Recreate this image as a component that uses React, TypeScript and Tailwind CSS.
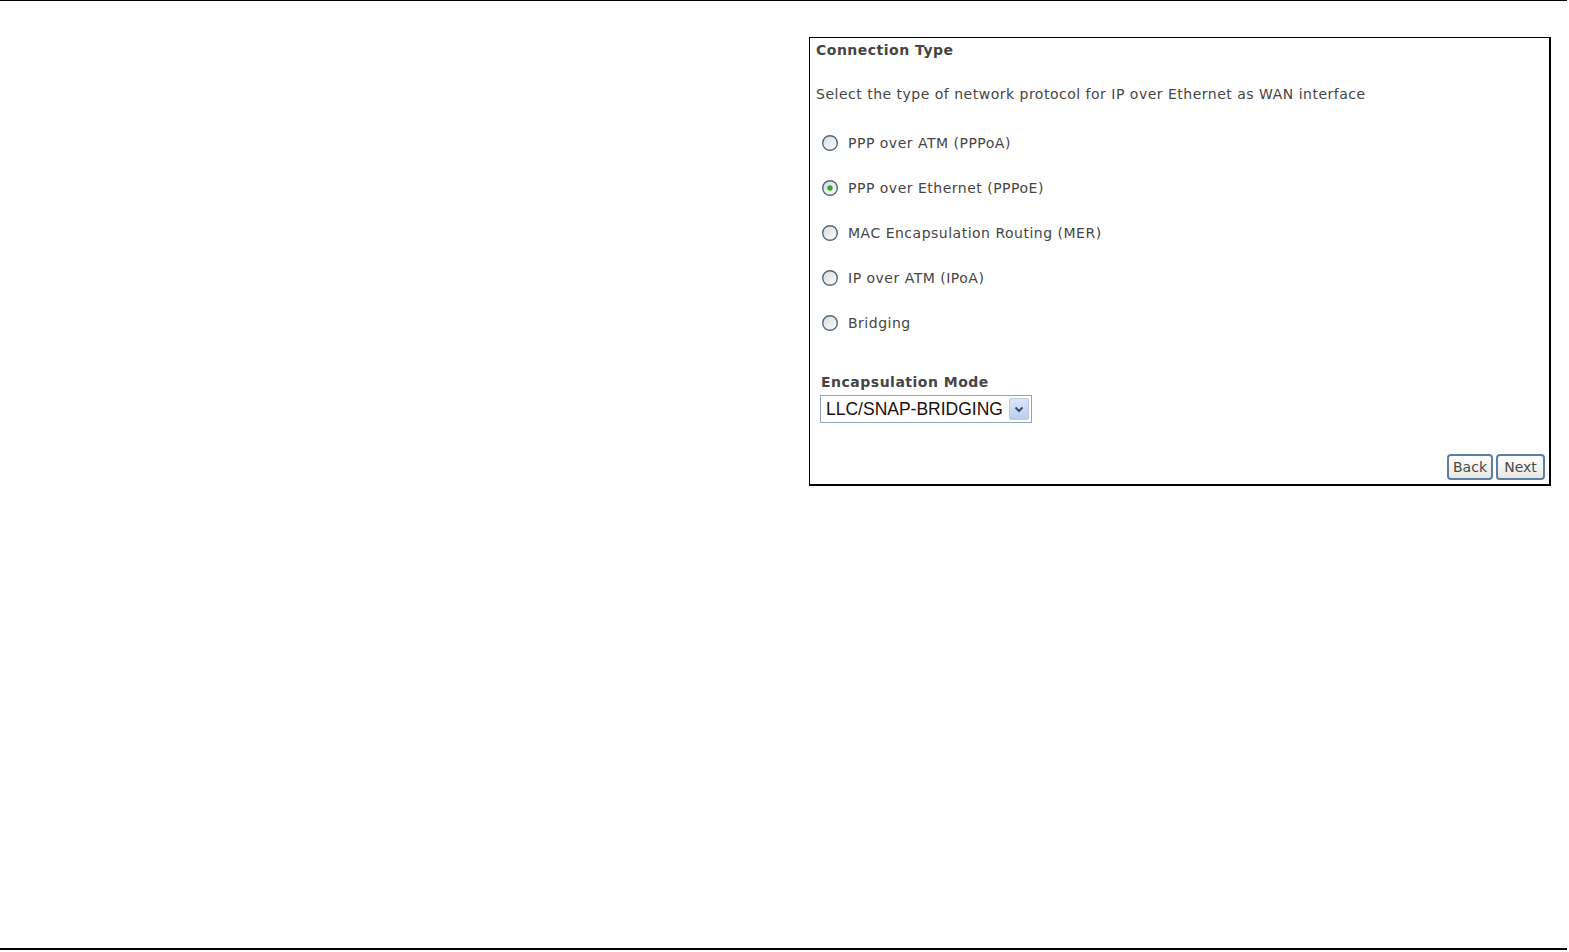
import React from "react";

const options = [
  "PPP over ATM (PPPoA)",
  "PPP over Ethernet (PPPoE)",
  "MAC Encapsulation Routing (MER)",
  "IP over ATM (IPoA)",
  "Bridging",
];

function Radio({ checked }: { checked: boolean }) {
  return (
    <svg width="18" height="18" viewBox="0 0 18 18" className="shrink-0">
      <defs>
        <linearGradient id="rg" x1="0" y1="0" x2="1" y2="1">
          <stop offset="0" stopColor="#d8d8d8" />
          <stop offset="1" stopColor="#ffffff" />
        </linearGradient>
      </defs>
      <circle cx="9" cy="9" r="7.3" fill="url(#rg)" stroke="#4d6a85" strokeWidth="1.4" />
      {checked && <circle cx="9" cy="9" r="2.7" fill="#2eaa2e" />}
    </svg>
  );
}

export default function App() {
  return (
    <div className="relative w-[1569px] h-[952px] bg-white overflow-hidden" style={{ fontFamily: "'DejaVu Sans', Verdana, sans-serif" }}>
      <div className="h-[1px] w-[1567px] bg-black" />
      <div className="flex">
        <div className="w-[809px] shrink-0" />
        <div className="mt-[36px] w-[742px] h-[449px] border-l border-t border-r-2 border-b-2 border-black flex flex-col text-[#454545] tracking-[0.5px]">
          <div className="pl-[6px] pt-[2px] text-[14px] font-bold leading-[20px]">Connection Type</div>
          <div className="pl-[6px] mt-[24px] text-[14px] leading-[20px]">Select the type of network protocol for IP over Ethernet as WAN interface</div>
          <div className="flex flex-col mt-[29px] gap-[25px] pl-[11px]">
            {options.map((o, i) => (
              <div key={o} className="flex items-center h-[20px]">
                <Radio checked={i === 1} />
                <span className="ml-[9px] text-[14px]">{o}</span>
              </div>
            ))}
          </div>
          <div className="pl-[11px] mt-[39px] text-[14px] font-bold leading-[20px]">Encapsulation Mode</div>
          <div className="pl-[10px] mt-[3px]">
            <div className="w-[212px] h-[28px] border border-[#8fa4bd] flex items-center justify-between pl-[5px] pr-[2px] bg-white tracking-normal">
              <span className="text-[17.5px] text-[#1c1010]" style={{ fontFamily: "'Liberation Sans', Arial, sans-serif" }}>LLC/SNAP-BRIDGING</span>
              <div className="w-[20px] h-[22px] bg-gradient-to-b from-[#dbe6f7] to-[#b9cdef] border border-[#b8c8e4] rounded-[2px] flex items-center justify-center">
                <svg width="10" height="7" viewBox="0 0 10 7">
                  <path d="M1.5 1.5 L5 5 L8.5 1.5" fill="none" stroke="#3b4d6b" strokeWidth="2" />
                </svg>
              </div>
            </div>
          </div>
          <div className="flex-1" />
          <div className="flex justify-end gap-[3px] pr-[4px] pb-[4px] tracking-normal">
            <button className="h-[26px] w-[46px] rounded-[4px] border-2 border-[#5d7fa3] bg-gradient-to-b from-[#ffffff] to-[#e8e8e4] text-[14px] text-[#4a4a4a] leading-none">Back</button>
            <button className="h-[26px] w-[49px] rounded-[4px] border-2 border-[#5d7fa3] bg-gradient-to-b from-[#ffffff] to-[#e8e8e4] text-[14px] text-[#4a4a4a] leading-none">Next</button>
          </div>
        </div>
      </div>
      <div className="absolute left-0 top-[948px] h-[2px] w-[1567px] bg-black" />
    </div>
  );
}
